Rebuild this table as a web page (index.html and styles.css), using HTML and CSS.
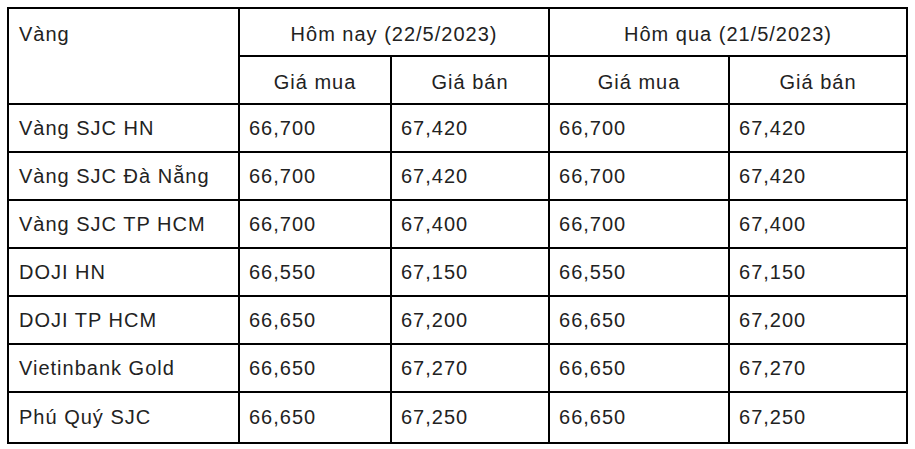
FILE: index.html
```html
<!DOCTYPE html>
<html lang="vi">
<head>
<meta charset="utf-8">
<title>Giá vàng</title>
<link rel="stylesheet" href="styles.css">
</head>
<body>
<table class="gold">
  <colgroup>
    <col class="c-name">
    <col class="c-a">
    <col class="c-b">
    <col class="c-c">
    <col class="c-d">
  </colgroup>
  <thead>
    <tr>
      <th class="h-name" rowspan="2">Vàng</th>
      <th class="h-day" colspan="2">Hôm nay (22/5/2023)</th>
      <th class="h-day" colspan="2">Hôm qua (21/5/2023)</th>
    </tr>
    <tr>
      <th class="h-sub">Giá mua</th>
      <th class="h-sub">Giá bán</th>
      <th class="h-sub">Giá mua</th>
      <th class="h-sub">Giá bán</th>
    </tr>
  </thead>
  <tbody>
    <tr><td class="name">Vàng SJC HN</td><td>66,700</td><td>67,420</td><td>66,700</td><td>67,420</td></tr>
    <tr><td class="name">Vàng SJC Đà Nẵng</td><td>66,700</td><td>67,420</td><td>66,700</td><td>67,420</td></tr>
    <tr><td class="name">Vàng SJC TP HCM</td><td>66,700</td><td>67,400</td><td>66,700</td><td>67,400</td></tr>
    <tr><td class="name">DOJI HN</td><td>66,550</td><td>67,150</td><td>66,550</td><td>67,150</td></tr>
    <tr><td class="name">DOJI TP HCM</td><td>66,650</td><td>67,200</td><td>66,650</td><td>67,200</td></tr>
    <tr><td class="name">Vietinbank Gold</td><td>66,650</td><td>67,270</td><td>66,650</td><td>67,270</td></tr>
    <tr class="last"><td class="name">Phú Quý SJC</td><td>66,650</td><td>67,250</td><td>66,650</td><td>67,250</td></tr>
  </tbody>
</table>
</body>
</html>
```

FILE: styles.css
```css
html, body {
  margin: 0;
  padding: 0;
  background: #ffffff;
}

body {
  padding: 7px;
  font-family: "Liberation Sans", Arial, sans-serif;
  font-size: 20px;
  color: #222222;
}

.gold {
  box-sizing: border-box;
  width: 901px;
  table-layout: fixed;
  border-collapse: separate;
  border-spacing: 0;
  border-left: 2px solid #000;
  border-top: 2px solid #000;
}

.c-name { width: 231px; }
.c-a { width: 152px; }
.c-b { width: 158px; }
.c-c { width: 180px; }
.c-d { width: 178px; }

.gold th,
.gold td {
  box-sizing: border-box;
  border-right: 2px solid #000;
  border-bottom: 2px solid #000;
  line-height: 22px;
  letter-spacing: 1px;
  font-weight: normal;
  white-space: nowrap;
}

.gold th {
  padding: 14px 0 10px;
  text-align: center;
}

.gold th.h-name {
  text-align: left;
  vertical-align: top;
  padding-left: 10px;
}

.gold td {
  padding: 12px 0 12px 9px;
  text-align: left;
  vertical-align: top;
}

.gold td.name {
  padding-left: 10px;
}

.gold tr.last td {
  padding-top: 13px;
  padding-bottom: 14px;
}
```
